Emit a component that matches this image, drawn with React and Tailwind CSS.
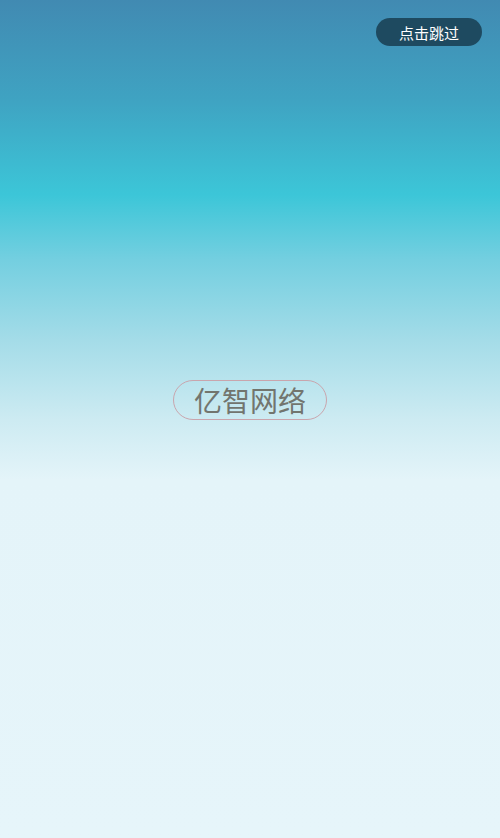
export default function App() {
  return (
    <div
      className="relative w-[500px] h-[838px] overflow-hidden bg-[linear-gradient(to_bottom,#418ab2_0px,#3fa3c2_100px,#3cc6d8_195px,#74cfe0_260px,#a4dce8_340px,#cdebf2_420px,#e4f4f9_480px,#e6f5fa_838px)]"
      style={{ fontFamily: '"Noto Sans CJK SC", "Noto Sans", sans-serif' }}
    >
      <div className="flex justify-end pt-[18px] pr-[18px]">
        <div className="w-[106px] h-[28px] rounded-full bg-[#1e4a60] flex items-center justify-center text-white text-[15px] leading-none">
          点击跳过
        </div>
      </div>
      <div className="flex justify-center pt-[334px]">
        <div className="w-[154px] h-[40px] rounded-full border border-[#c9a5ad] flex items-center justify-center text-[#72756e] text-[28px] leading-none">
          亿智网络
        </div>
      </div>
    </div>
  );
}
